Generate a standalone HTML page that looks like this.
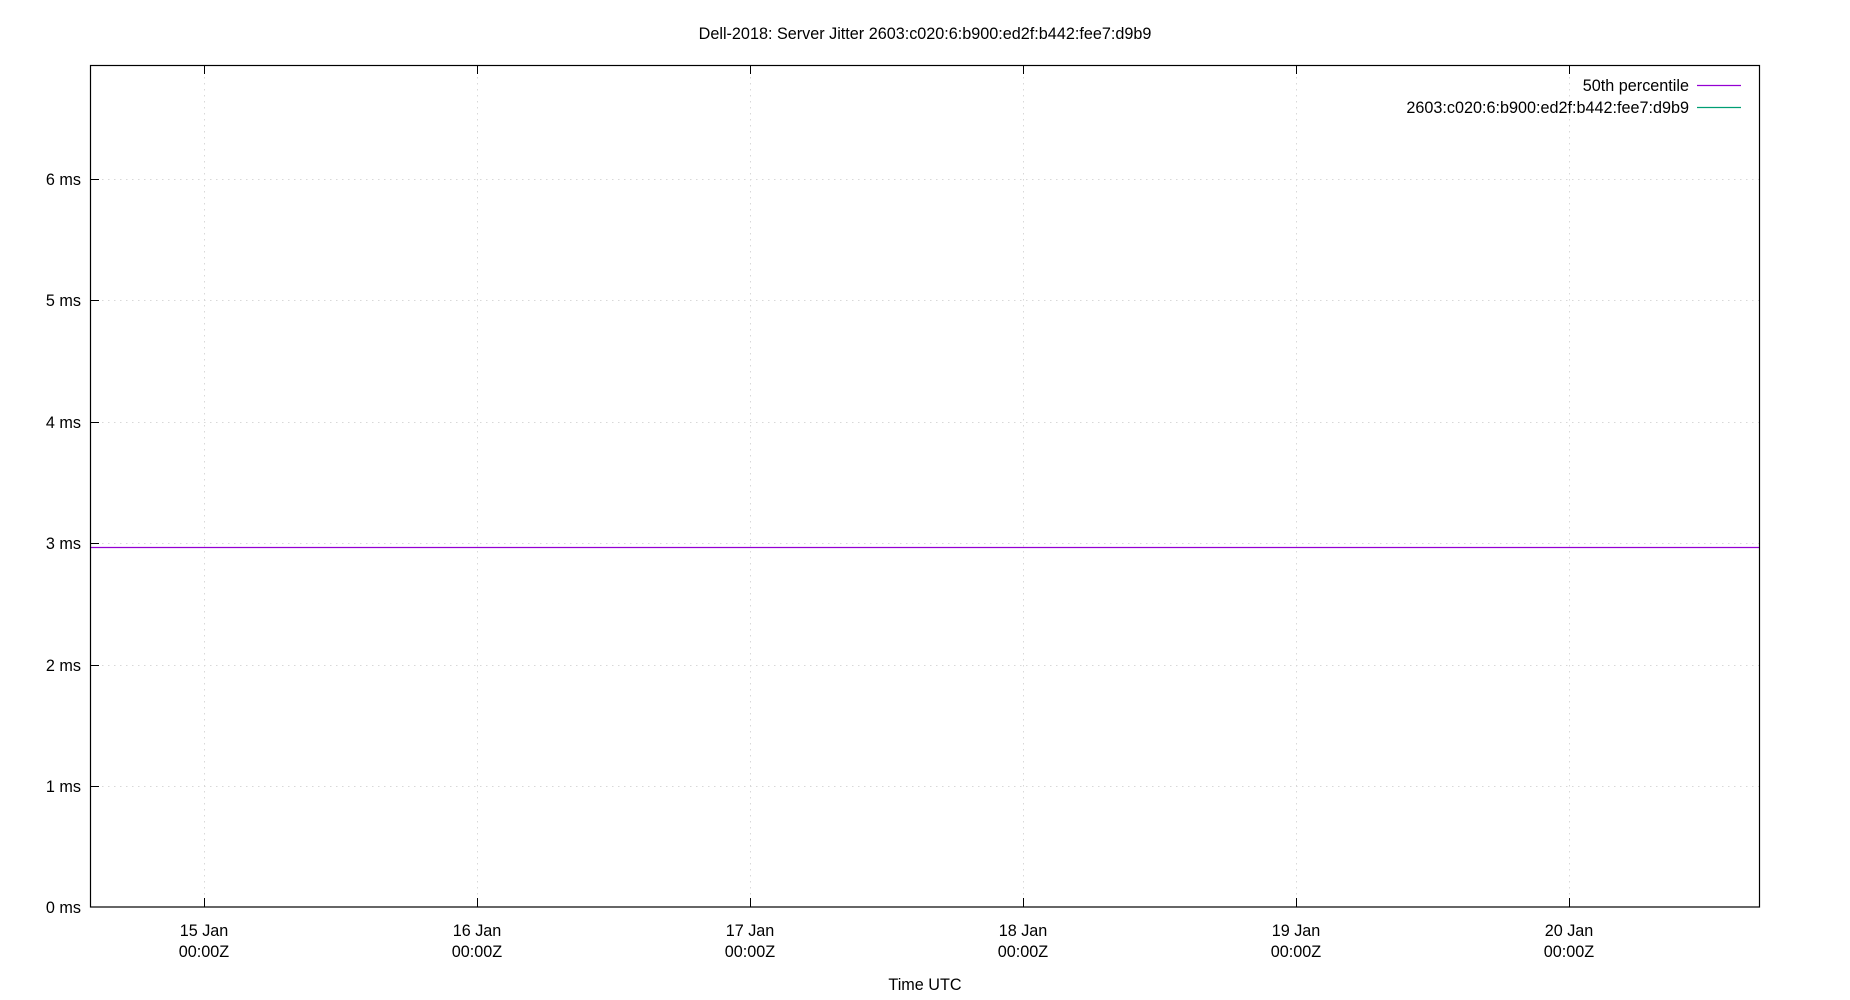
<!DOCTYPE html>
<html><head><meta charset="utf-8"><style>
html,body{margin:0;padding:0;background:#fff;}
svg{display:block;}
text{font-family:"Liberation Sans","DejaVu Sans",sans-serif;font-size:16.2px;fill:#000;}
</style></head><body>
<svg width="1850" height="1000" viewBox="0 0 1850 1000" xmlns="http://www.w3.org/2000/svg">
<g stroke="#d8d8d8" stroke-width="1" stroke-dasharray="1.5,4.5">
<line x1="90" y1="786.5" x2="1759" y2="786.5"/>
<line x1="90" y1="665.5" x2="1759" y2="665.5"/>
<line x1="90" y1="543.5" x2="1759" y2="543.5"/>
<line x1="90" y1="422.5" x2="1759" y2="422.5"/>
<line x1="90" y1="300.5" x2="1759" y2="300.5"/>
<line x1="90" y1="179.5" x2="1759" y2="179.5"/>
<line x1="204.5" y1="65" x2="204.5" y2="907"/>
<line x1="477.5" y1="65" x2="477.5" y2="907"/>
<line x1="750.5" y1="65" x2="750.5" y2="907"/>
<line x1="1023.5" y1="65" x2="1023.5" y2="907"/>
<line x1="1296.5" y1="65" x2="1296.5" y2="907"/>
<line x1="1569.5" y1="65" x2="1569.5" y2="907"/>
</g>
<g stroke="#000" stroke-width="1">
<line x1="90" y1="786.5" x2="99" y2="786.5"/>
<line x1="90" y1="665.5" x2="99" y2="665.5"/>
<line x1="90" y1="543.5" x2="99" y2="543.5"/>
<line x1="90" y1="422.5" x2="99" y2="422.5"/>
<line x1="90" y1="300.5" x2="99" y2="300.5"/>
<line x1="90" y1="179.5" x2="99" y2="179.5"/>
<line x1="204.5" y1="907" x2="204.5" y2="898"/><line x1="204.5" y1="65" x2="204.5" y2="74"/>
<line x1="477.5" y1="907" x2="477.5" y2="898"/><line x1="477.5" y1="65" x2="477.5" y2="74"/>
<line x1="750.5" y1="907" x2="750.5" y2="898"/><line x1="750.5" y1="65" x2="750.5" y2="74"/>
<line x1="1023.5" y1="907" x2="1023.5" y2="898"/><line x1="1023.5" y1="65" x2="1023.5" y2="74"/>
<line x1="1296.5" y1="907" x2="1296.5" y2="898"/><line x1="1296.5" y1="65" x2="1296.5" y2="74"/>
<line x1="1569.5" y1="907" x2="1569.5" y2="898"/><line x1="1569.5" y1="65" x2="1569.5" y2="74"/>
</g>
<line x1="90" y1="547.5" x2="1759" y2="547.5" stroke="#9400d3" stroke-width="1.3"/>
<rect x="90.5" y="65.5" width="1669" height="841.5" fill="none" stroke="#000" stroke-width="1.2"/>
<text x="925" y="39" text-anchor="middle">Dell-2018: Server Jitter 2603:c020:6:b900:ed2f:b442:fee7:d9b9</text>
<g text-anchor="end">
<text x="81" y="913">0 ms</text>
<text x="81" y="792">1 ms</text>
<text x="81" y="671">2 ms</text>
<text x="81" y="549">3 ms</text>
<text x="81" y="428">4 ms</text>
<text x="81" y="306">5 ms</text>
<text x="81" y="185">6 ms</text>
<text x="1689" y="91">50th percentile</text>
<text x="1689" y="113">2603:c020:6:b900:ed2f:b442:fee7:d9b9</text>
</g>
<line x1="1697" y1="85.5" x2="1741" y2="85.5" stroke="#9400d3" stroke-width="1.3"/>
<line x1="1697" y1="107.5" x2="1741" y2="107.5" stroke="#009e73" stroke-width="1.3"/>
<g text-anchor="middle">
<text x="204" y="936">15 Jan</text><text x="204" y="957">00:00Z</text>
<text x="477" y="936">16 Jan</text><text x="477" y="957">00:00Z</text>
<text x="750" y="936">17 Jan</text><text x="750" y="957">00:00Z</text>
<text x="1023" y="936">18 Jan</text><text x="1023" y="957">00:00Z</text>
<text x="1296" y="936">19 Jan</text><text x="1296" y="957">00:00Z</text>
<text x="1569" y="936">20 Jan</text><text x="1569" y="957">00:00Z</text>
<text x="925" y="990">Time UTC</text>
</g>
</svg>
</body></html>
